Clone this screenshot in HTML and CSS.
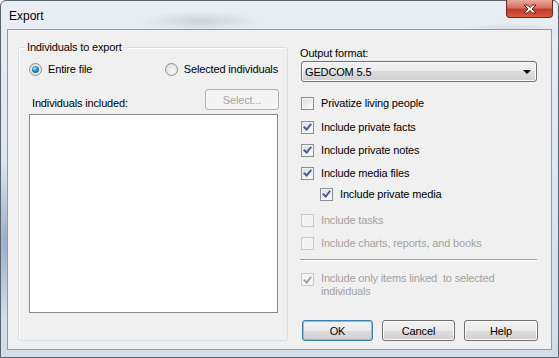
FILE: index.html
```html
<!DOCTYPE html>
<html lang="en">
<head>
    <meta charset="UTF-8">
    <meta name="viewport" content="width=device-width, initial-scale=1.0">
    <title>Export</title>
    <link rel="stylesheet" href="styles.css">
</head>
<body>
    <div class="window">
        <div class="titlebar">
            <span class="title">Export</span>
            <button class="close-btn">
                <svg width="16" height="10" viewBox="0 0 16 10">
                    <path d="M2 1 H5.5 L8 3.5 L10.5 1 H14 L10 5 L14 9 H10.5 L8 6.5 L5.5 9 H2 L6 5 Z" fill="#ffffff" stroke="#5a2320" stroke-width="1" stroke-linejoin="round"/>
                </svg>
            </button>
        </div>
        <div class="client">
            <fieldset class="group">
                <legend>Individuals to export</legend>
                <div class="radio-row">
                    <label class="radio-item"><span class="radio checked"></span>Entire file</label>
                    <label class="radio-item"><span class="radio"></span>Selected individuals</label>
                </div>
                <div class="included-row">
                    <span class="included-label">Individuals included:</span>
                    <button class="btn select-btn" disabled>Select...</button>
                </div>
                <div class="listbox"></div>
            </fieldset>
            <div class="options">
                <div class="field-label">Output format:</div>
                <div class="combo">
                    <span>GEDCOM 5.5</span>
                    <span class="arrow"></span>
                </div>
                <label class="check-row privatize"><span class="check"></span>Privatize living people</label>
                <label class="check-row facts"><span class="check checked"></span>Include private facts</label>
                <label class="check-row notes"><span class="check checked"></span>Include private notes</label>
                <label class="check-row media"><span class="check checked"></span>Include media files</label>
                <label class="check-row sub-media"><span class="check checked"></span>Include private media</label>
                <label class="check-row tasks disabled"><span class="check"></span>Include tasks</label>
                <label class="check-row charts disabled"><span class="check"></span>Include charts, reports, and books</label>
                <div class="separator"></div>
                <label class="check-row linked disabled"><span class="check checked"></span><span>Include only items linked&nbsp; to selected<br>individuals</span></label>
                <div class="buttons">
                    <button class="btn ok-btn">OK</button>
                    <button class="btn cancel-btn">Cancel</button>
                    <button class="btn help-btn">Help</button>
                </div>
            </div>
        </div>
    </div>
</body>
</html>
```

FILE: styles.css
```css
body {
    margin: 0;
    width: 559px;
    height: 358px;
    overflow: hidden;
    font-family: "Liberation Sans", Arial, sans-serif;
    font-size: 11px;
    letter-spacing: -0.15px;
    color: #000;
}
.window {
    box-sizing: border-box;
    height: 358px;
    border: 1px solid #59636e;
    border-radius: 6px 6px 0 0;
    background:
        radial-gradient(ellipse 60px 10px at 200px 20px, rgba(150, 160, 170, 0.35), transparent),
        radial-gradient(ellipse 50px 10px at 510px 32px, rgba(140, 150, 160, 0.3), transparent),
        radial-gradient(ellipse 14px 80px at 4px 240px, rgba(70, 110, 150, 0.45), transparent),
        linear-gradient(#e9eef3, #dfe7ef 40%, #d3dde8);
    display: flex;
    flex-direction: column;
}
.titlebar {
    height: 28px;
    display: flex;
    justify-content: space-between;
    align-items: flex-start;
}
.title {
    font-size: 12px;
    letter-spacing: 0;
    margin: 8px 0 0 8px;
    text-shadow: 0 0 6px #fff;
}
.close-btn {
    width: 47px;
    height: 18px;
    margin: -1px 5px 0 0;
    padding: 0;
    border: 1px solid #6b2a26;
    border-top: none;
    border-radius: 0 0 4px 4px;
    background: linear-gradient(#e9a99c, #d9705f 45%, #c53b2a 55%, #d65a3f);
    display: flex;
    align-items: center;
    justify-content: center;
}
.client {
    flex: 1;
    margin: 0 6px 7px 6px;
    background: #f0f0f0;
    border: 1px solid #8f9baa;
    display: grid;
    grid-template-columns: 270px 238px;
    column-gap: 12px;
    align-content: start;
    align-items: stretch;
    padding: 10px 0 0 10px;
}
.group {
    margin: 0;
    padding: 0 9px 27px 10px;
    border: 1px solid #d5dfe5;
    border-radius: 3px;
    box-shadow: inset 1px 1px 0 #fff;
    min-width: 0;
}
.group legend {
    margin-left: -4px;
    padding: 0 2px;
    line-height: 14px;
}
.radio-row {
    margin-top: 8px;
    height: 14px;
    display: flex;
    justify-content: space-between;
}
.radio-item {
    display: flex;
    align-items: center;
    gap: 6px;
    line-height: 14px;
}
.radio {
    box-sizing: border-box;
    width: 13px;
    height: 13px;
    border-radius: 50%;
    border: 1px solid #8c8e90;
    background: radial-gradient(circle at 60% 65%, #f8f8f8, #d4d4d4);
    display: flex;
    align-items: center;
    justify-content: center;
}
.radio.checked::after {
    content: "";
    width: 7px;
    height: 7px;
    border-radius: 50%;
    background: radial-gradient(circle at 40% 35%, #9fe2f8, #1b80b8 50%, #0c4a77);
}
.included-row {
    margin-top: 13px;
    height: 21px;
    display: flex;
    justify-content: space-between;
    align-items: flex-end;
}
.included-label {
    line-height: 14px;
    margin-left: 3px;
}
.listbox {
    margin-top: 4px;
    height: 199px;
    box-sizing: border-box;
    background: #fff;
    border: 1px solid #828790;
}
.btn {
    font-family: inherit;
    font-size: 11px;
    letter-spacing: -0.15px;
    height: 21px;
    padding: 0;
    border: 1px solid #707070;
    border-radius: 3px;
    color: #000;
    background: linear-gradient(#f2f2f2, #ebebeb 50%, #dddddd 50%, #cfcfcf);
    box-shadow: inset 0 0 0 1px #fcfcfc;
}
.btn:disabled {
    border-color: #adb2b5;
    background: #f4f4f4;
    color: #a5a5a5;
    box-shadow: none;
}
.select-btn {
    width: 74px;
    margin-right: -1px;
}
.options {
    display: flex;
    flex-direction: column;
}
.field-label {
    margin-top: 6px;
    line-height: 14px;
}
.combo {
    box-sizing: border-box;
    margin: 1px 1px 0 1px;
    height: 21px;
    border: 1px solid #707070;
    border-radius: 3px;
    background: linear-gradient(#f2f2f2, #ebebeb 50%, #dddddd 50%, #cfcfcf);
    box-shadow: inset 0 0 0 1px #fcfcfc;
    display: flex;
    justify-content: space-between;
    align-items: center;
    padding: 0 5px 0 3px;
}
.arrow {
    width: 0;
    height: 0;
    border-left: 4px solid transparent;
    border-right: 4px solid transparent;
    border-top: 4px solid #000;
}
.check-row {
    display: flex;
    align-items: center;
    gap: 7px;
    line-height: 14px;
    margin-left: 1px;
}
.check {
    box-sizing: border-box;
    flex: none;
    width: 13px;
    height: 13px;
    border: 1px solid #8e8f8f;
    background: linear-gradient(135deg, #dcdcdc, #fdfdfd);
    box-shadow: inset 0 0 0 1px #f4f4f4;
    display: flex;
    align-items: center;
    justify-content: center;
}
.check.checked::after {
    content: "";
    width: 3px;
    height: 6px;
    margin-top: -2px;
    border-right: 2px solid #4a5f97;
    border-bottom: 2px solid #4a5f97;
    transform: rotate(40deg);
}
.disabled {
    color: #a3a3a3;
}
.disabled .check {
    border-color: #c9c9c9;
    background: #f4f4f4;
}
.disabled .check.checked::after {
    border-color: #a3a3a3;
}
.privatize { margin-top: 14px; }
.facts { margin-top: 10px; }
.notes { margin-top: 9px; }
.media { margin-top: 9px; }
.sub-media { margin-top: 7px; margin-left: 20px; }
.tasks { margin-top: 12px; }
.charts { margin-top: 9px; }
.separator {
    margin-top: 9px;
    height: 1px;
    width: 237px;
    background: #a0a0a0;
    border-bottom: 1px solid #fff;
}
.linked {
    margin-top: 11px;
    align-items: flex-start;
    line-height: 13px;
}
.linked .check {
    margin-top: 1px;
}
.buttons {
    margin-top: auto;
    display: flex;
    justify-content: flex-end;
    gap: 9px;
}
.ok-btn {
    width: 71px;
    border-color: #3c7fb1;
    box-shadow: inset 0 0 0 1px #48d8fb;
}
.cancel-btn {
    width: 73px;
}
.help-btn {
    width: 74px;
}
```
